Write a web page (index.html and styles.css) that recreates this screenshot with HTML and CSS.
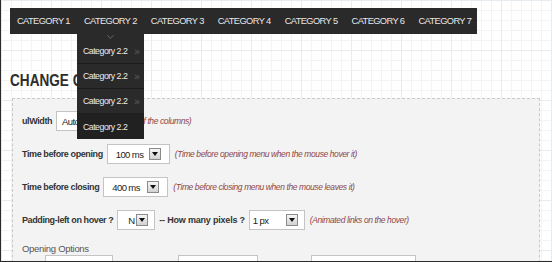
FILE: index.html
```html
<!DOCTYPE html>
<html>
<head>
<meta charset="utf-8">
<link rel="stylesheet" href="styles.css">
</head>
<body>
<div class="page">
  <nav class="menu">
    <div class="menu-item">CATEGORY 1</div>
    <div class="menu-item has-sub">CATEGORY 2
      <div class="submenu">
        <div class="sub-caret"><svg width="7" height="4" viewBox="0 0 7 4"><path d="M0.5 0.5 L3.5 3.2 L6.5 0.5" fill="none" stroke="#6a6a6a" stroke-width="1"/></svg></div>
        <div class="sub-item">Category 2.2<span class="sub-arrow">»</span></div>
        <div class="sub-item">Category 2.2<span class="sub-arrow">»</span></div>
        <div class="sub-item">Category 2.2<span class="sub-arrow">»</span></div>
        <div class="sub-item sub-item-active">Category 2.2</div>
      </div>
    </div>
    <div class="menu-item">CATEGORY 3</div>
    <div class="menu-item">CATEGORY 4</div>
    <div class="menu-item">CATEGORY 5</div>
    <div class="menu-item">CATEGORY 6</div>
    <div class="menu-item">CATEGORY 7</div>
  </nav>

  <h1 class="title">CHANGE CSS</h1>

  <div class="panel">
    <div class="row">
      <span class="label">ulWidth</span>
      <span class="select w-auto"><span class="val">Auto</span><span class="btn"></span></span>
      <span class="hint">(Width of the columns)</span>
    </div>
    <div class="row">
      <span class="label">Time before opening</span>
      <span class="select w-100"><span class="val">100 ms</span><span class="btn"></span></span>
      <span class="hint">(Time before opening menu when the mouse hover it)</span>
    </div>
    <div class="row">
      <span class="label">Time before closing</span>
      <span class="select w-400"><span class="val">400 ms</span><span class="btn"></span></span>
      <span class="hint">(Time before closing menu when the mouse leaves it)</span>
    </div>
    <div class="row">
      <span class="label">Padding-left on hover ?</span>
      <span class="select w-n"><span class="val">N</span><span class="btn"></span></span>
      <span class="label label-wide">-- How many pixels ?</span>
      <span class="select w-px"><span class="val">1 px</span><span class="btn"></span></span>
      <span class="hint">(Animated links on the hover)</span>
    </div>
    <div class="section-label">Opening Options</div>
    <div class="boxes">
      <span class="box box-1"></span>
      <span class="box box-2"></span>
      <span class="box box-3"></span>
    </div>
  </div>
</div>
</body>
</html>
```

FILE: styles.css
```css
* { box-sizing: border-box; }

html, body {
  margin: 0;
  padding: 0;
}

body {
  width: 552px;
  height: 262px;
  overflow: hidden;
  font-family: "Liberation Sans", Arial, sans-serif;
}

.page {
  width: 552px;
  height: 262px;
  overflow: hidden;
  padding: 8px 0 0 9px;
  border-left: 1px solid #2a2a2a;
  border-bottom: 1px solid #2a2a2a;
  background-color: #ffffff;
  background-image:
    linear-gradient(to right, #e6ebef 1px, transparent 1px),
    linear-gradient(to bottom, #e6ebef 1px, transparent 1px),
    linear-gradient(to right, #f1f4f6 1px, transparent 1px),
    linear-gradient(to bottom, #f1f4f6 1px, transparent 1px);
  background-size: 50px 50px, 50px 50px, 10px 10px, 10px 10px;
}

/* menu */
.menu {
  display: flex;
  width: 467px;
  height: 26px;
  background: #2b2a2a;
  position: relative;
  z-index: 5;
}

.menu-item {
  position: relative;
  padding: 0 7px;
  line-height: 26px;
  font-size: 9.3px;
  letter-spacing: -0.6px;
  color: #e8e8e8;
  white-space: nowrap;
}

.submenu {
  position: absolute;
  top: 26px;
  left: 0;
  right: 0;
  background: #2b2a2a;
  line-height: normal;
  letter-spacing: 0;
}

.sub-caret {
  height: 5px;
  display: flex;
  justify-content: center;
  align-items: flex-start;
  padding-top: 1px;
}

.sub-caret svg { display: block; }

.sub-item {
  height: 25px;
  display: flex;
  align-items: center;
  justify-content: space-between;
  padding: 0 4px 0 6px;
  font-size: 8.8px;
  letter-spacing: -0.5px;
  color: #ececec;
  border-bottom: 1px solid #1d1d1d;
}

.sub-item-active {
  background: #222121;
  border-bottom: none;
}

.sub-arrow {
  color: #5c5c5c;
  font-size: 10px;
  letter-spacing: 0;
}

/* title */
.title {
  margin: 38px 0 0 0;
  height: 17px;
  line-height: 17px;
  font-size: 17px;
  font-weight: bold;
  color: #2d2d2d;
  transform: scaleX(0.8);
  transform-origin: left center;
}

/* panel */
.panel {
  margin: 9px 0 0 2px;
  width: 528px;
  height: 200px;
  border: 1px dashed #c9c9c9;
  background: #f3f3f3;
  padding: 12px 0 0 9px;
}

.row {
  display: flex;
  align-items: center;
  gap: 4px;
  height: 20px;
  margin-bottom: 13px;
}

.label {
  font-size: 9px;
  font-weight: bold;
  letter-spacing: -0.4px;
  color: #333;
  white-space: nowrap;
}

.label-wide {
  letter-spacing: -0.2px;
}

.hint {
  margin-left: 1px;
  font-size: 8.5px;
  font-style: italic;
  letter-spacing: -0.4px;
  color: #8e4848;
  white-space: nowrap;
}

.select {
  display: flex;
  align-items: center;
  justify-content: space-between;
  height: 20px;
  padding: 0 8px 0 8px;
  background: #fff;
  border: 1px solid #c4c4c4;
  font-size: 9.5px;
  letter-spacing: -0.6px;
  color: #222;
}

.w-auto { width: 54px; padding-left: 5px; }
.w-100 { width: 63px; }
.w-400 { width: 65px; }
.w-n { width: 38px; flex: none; padding-left: 10px; padding-right: 6px; }
.w-px { width: 56px; flex: none; padding-left: 3px; padding-right: 6px; }

.btn {
  width: 12px;
  height: 12px;
  border: 1px solid #8a8a8a;
  background: linear-gradient(#f6f6f6, #d2d2d2);
  display: flex;
  align-items: center;
  justify-content: center;
}

.btn::after {
  content: "";
  border-left: 3px solid transparent;
  border-right: 3px solid transparent;
  border-top: 4px solid #111;
}

.section-label {
  margin-top: 3px;
  height: 12px;
  line-height: 12px;
  font-size: 9.5px;
  letter-spacing: -0.3px;
  color: #555;
}

.boxes {
  display: flex;
  margin-top: 0;
}

.box {
  height: 20px;
  background: #fff;
  border: 1px solid #c4c4c4;
}

.box-1 { margin-left: 23px; width: 68px; }
.box-2 { margin-left: 65px; width: 80px; }
.box-3 { margin-left: 53px; width: 105px; }
```
